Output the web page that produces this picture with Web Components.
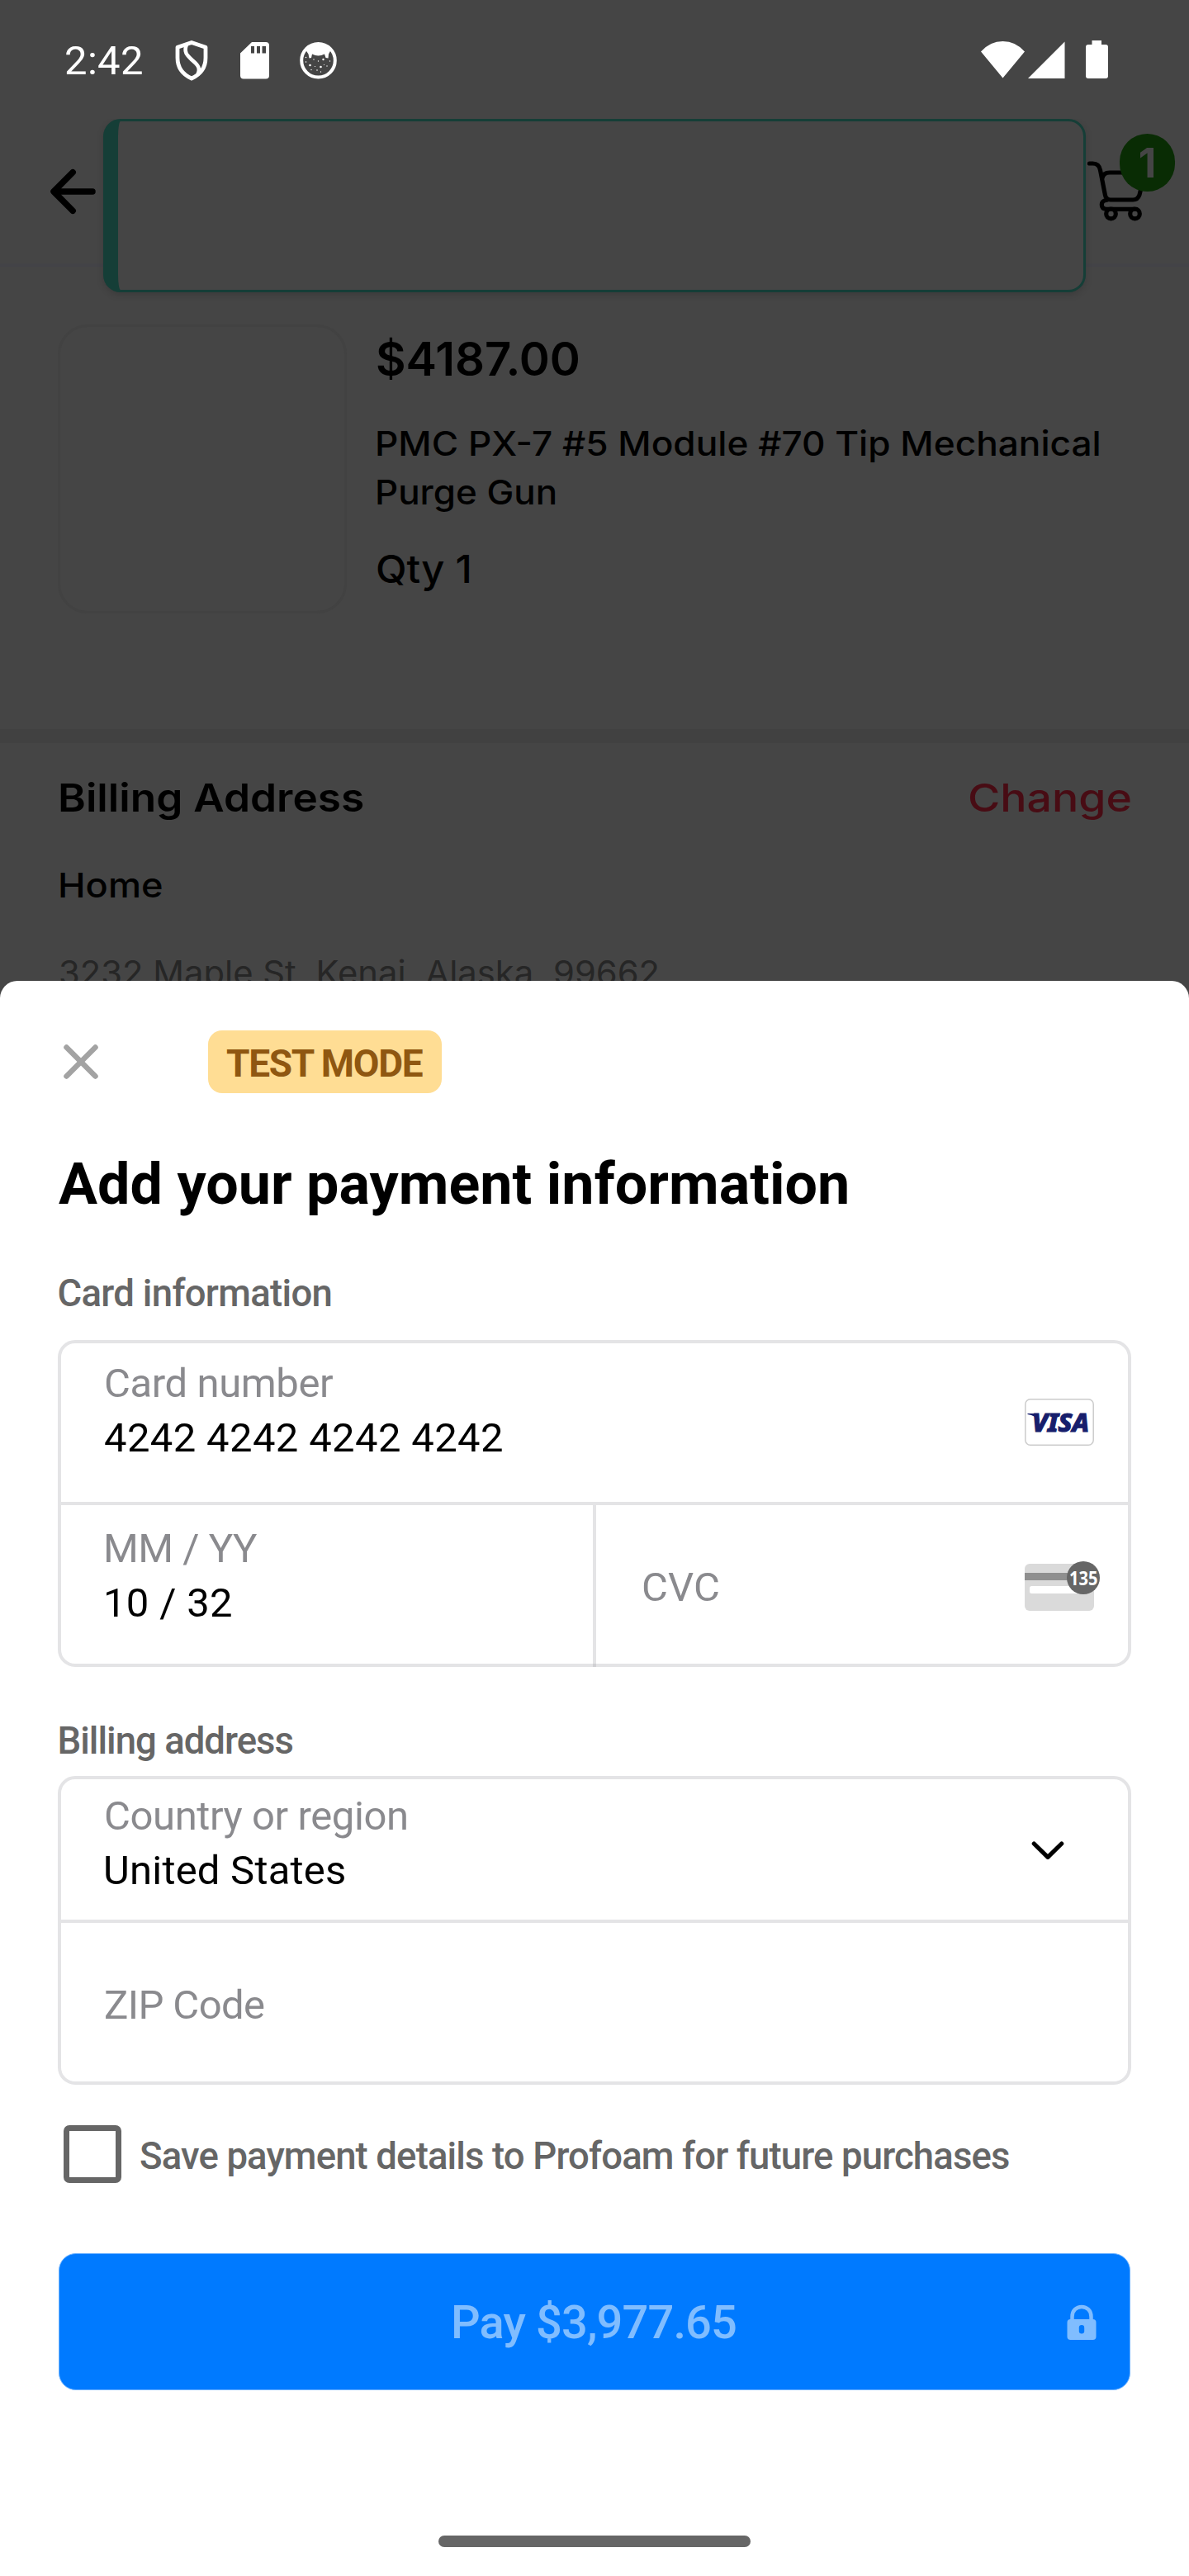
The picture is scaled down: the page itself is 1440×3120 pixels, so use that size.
<!DOCTYPE html>
<html lang="en">
<head>
<meta charset="utf-8">
<title>Checkout</title>
<style>
  html, body { margin: 0; background: #454545; }
  body { width: 1440px; height: 3120px; overflow: hidden; font-family: Roboto, "Liberation Sans", sans-serif; color: #000; }
</style>
</head>
<body>
<status-bar></status-bar>
<checkout-screen>
  <app-header slot="header" count="1"></app-header>
  <product-summary slot="product"></product-summary>
  <address-block slot="address"></address-block>
</checkout-screen>
<payment-sheet></payment-sheet>

<script>
const define = (name, html, setup) => {
  const template = document.createElement('template');
  template.innerHTML = html;
  customElements.define(name, class extends HTMLElement {
    constructor() {
      super();
      this.attachShadow({ mode: 'open' }).appendChild(template.content.cloneNode(true));
    }
    connectedCallback() { if (setup) setup(this, this.shadowRoot); }
  });
};

/* One line of text whose ink spans the "ink" width and starts at the left edge:
   by tracking, or, with "stretch", by widening the letters. */
const pen = document.createElement('canvas').getContext('2d');
define('fit-text', `<style>
    :host { display: block; white-space: nowrap; flex: none; }
    span { display: block; transform-origin: 0 0; }
  </style><span><slot></slot></span>`,
  (el, root) => {
    const text = el.textContent;
    if (!text) return;
    const s = getComputedStyle(el);
    pen.font = `${s.fontStyle} ${s.fontWeight} ${s.fontSize} ${s.fontFamily}`;
    const m = pen.measureText(text);
    const ink = parseFloat(el.getAttribute('ink'));
    const natural = m.actualBoundingBoxLeft + m.actualBoundingBoxRight;
    const span = root.querySelector('span');
    el.style.width = ink + 'px';
    if (el.hasAttribute('stretch')) {
      const k = ink / natural;
      span.style.width = natural + 'px';
      span.style.transform = `scaleX(${k})`;
      span.style.marginLeft = m.actualBoundingBoxLeft * k + 'px';
    } else {
      span.style.letterSpacing = (ink - natural) / (text.length - 1) + 'px';
      span.style.marginLeft = m.actualBoundingBoxLeft + 'px';
    }
  });

define('status-bar', `
  <style>
    :host { display: flex; box-sizing: border-box; height: 144px; padding: 45px 98px 0 80px; color: #fff; }
    fit-text { font-size: 49px; line-height: 58px; margin-right: 40px; }
    svg { display: block; fill: #fff; height: 56px; flex: none; }
    .left, .right { display: flex; align-items: flex-start; }
    .left { flex: 1; }
  </style>
  <div class="left">
    <fit-text ink="92">2:42</fit-text>
    <svg width="40" viewBox="0 0 40 56"><path d="M20 6.500 37 12.300V25C37 37 30 45.500 20 50 10 45.500 3 37 3 25V12.300Z" fill="none" stroke="#fff" stroke-width="4.800" stroke-linejoin="round"/><path d="M14.500 8C9.500 18 15 22.500 21 28 28 34 31 38 27.500 45" fill="none" stroke="#fff" stroke-width="4.600"/></svg>
    <svg width="35" viewBox="0 0 35 56" style="margin-left:39px"><path fill-rule="evenodd" d="M14 6H31Q35 6 35 10V46.500Q35 50.500 31 50.500H4Q0 50.500 0 46.500V19.500ZM13 11V19.500H17V11ZM20 11V19.500H24V11ZM26.500 11V19.500H31V11Z"/></svg>
    <svg width="45" viewBox="0 0 45 56" style="margin-left:37px"><circle cx="22.500" cy="28.300" r="20.300" fill="none" stroke="#fff" stroke-width="4"/><path d="M7.500 16Q12 7 22.500 7T37.500 16L35 20.500 34.500 25.500 31.500 25 30 20.500Q22.500 24.500 15 20.500L14 25 11.500 25.500 10.500 20.500Z"/><g><circle cx="12.500" cy="34" r="1.300"/><circle cx="28.500" cy="27" r="1.200"/><circle cx="25.500" cy="36" r="1.300"/><circle cx="18.500" cy="35.500" r=".6"/><circle cx="22.500" cy="29" r=".7"/><circle cx="33" cy="35" r=".7"/><circle cx="14" cy="39.500" r=".7"/><circle cx="21" cy="40" r=".8"/><circle cx="25.500" cy="42" r=".7"/><circle cx="29.500" cy="33.500" r=".6"/><circle cx="7.500" cy="30" r=".8"/><circle cx="36.500" cy="29" r=".7"/><circle cx="7.500" cy="24.500" r=".8"/><circle cx="17" cy="27" r=".7"/></g></svg>
  </div>
  <div class="right">
    <svg width="53" viewBox="0 0 53 56"><path d="M0 17.500Q11 5 26.500 5T53 17.500L26.500 49.500Z"/></svg>
    <svg width="45" viewBox="0 0 45 56" style="margin-left:4px"><path d="M44.500 5.500V50H0Z"/></svg>
    <svg width="27" viewBox="0 0 27 56" style="margin-left:25px"><path d="M7.500 4H19V9H24Q27 9 27 12V47Q27 50 24 50H3Q0 50 0 47V12Q0 9 3 9H7.500Z"/></svg>
  </div>`);

define('checkout-screen', `
  <style>
    :host { display: block; height: 1044px; overflow: hidden; font-family: Inter, "Liberation Sans", sans-serif; }
    .rule { height: 17px; background: #414141; }
  </style>
  <slot name="header"></slot>
  <slot name="product"></slot>
  <div class="rule"></div>
  <slot name="address"></slot>`);

define('app-header', `
  <style>
    :host { display: flex; align-items: flex-start; box-sizing: border-box; height: 179px; border-bottom: 4px solid #434347; padding-left: 61px; position: relative; z-index: 1; }
    svg { display: block; flex: none; fill: none; stroke: #000; stroke-linecap: round; stroke-linejoin: round; }
    .back { margin-top: 60px; }
    .toast { box-sizing: border-box; flex: none; width: 1190px; height: 210px; margin-left: 9px; background: #454545; border: 3.500px solid #153e37; border-left-width: 18px; border-radius: 21px; box-shadow: 0 3px 8px rgba(0,0,0,.15); }
    .cart { position: relative; margin: 50px 0 0 1px; }
    .badge { position: absolute; left: 40px; top: -32px; width: 67px; height: 70px; border-radius: 34px; background: #092c04; display: flex; justify-content: center; color: #454545; font: 700 50px/70px Inter, sans-serif; }
  </style>
  <svg class="back" width="55" height="56" viewBox="0 0 55 56" stroke-width="7.500"><path d="M51 28H4.500M27.200 4.700 4 28 27.200 51.300"/></svg>
  <div class="toast"></div>
  <div class="cart">
    <svg width="72" height="76" viewBox="0 0 72 76" stroke-width="5.200"><path d="M3.500 4H7.500Q15 4 16.500 12L22.500 42.500Q23.500 48 29 48H56Q62 48 64 42L69 21Q70 15 64 15H28Q20 15 19 22M24 48.500Q18.300 49 18.300 54T24 59.300H58"/><circle cx="29.500" cy="65" r="5.800"/><circle cx="58.500" cy="65" r="5.800"/></svg>
    <div class="badge"></div>
  </div>`,
  (el, root) => { root.querySelector('.badge').textContent = el.getAttribute('count'); });

define('product-summary', `
  <style>
    :host { display: flex; box-sizing: border-box; height: 560px; padding: 70px 70px 0; gap: 37px; }
    .thumb { box-sizing: border-box; width: 350px; height: 350px; border: 3.500px solid #424242; border-radius: 36px; flex: none; }
    .info { display: flex; flex-direction: column; padding-top: 8px; }
    .price { font-size: 56px; font-weight: 600; line-height: 68px; }
    .name { font-size: 41px; font-weight: 450; line-height: 58.500px; }
    .qty { font-size: 47px; font-weight: 450; line-height: 60px; margin-top: 34px; }
  </style>
  <div class="thumb"></div>
  <div class="info">
    <fit-text stretch class="price" ink="244">$4187.00</fit-text>
    <fit-text stretch class="name" ink="874" style="margin-top:39px">PMC PX-7 #5 Module #70 Tip Mechanical</fit-text>
    <fit-text stretch class="name" ink="215">Purge Gun</fit-text>
    <fit-text stretch class="qty" ink="111">Qty 1</fit-text>
  </div>`);

define('address-block', `
  <style>
    :host { display: block; padding: 36px 71px 0 73px; }
    .head { display: flex; justify-content: space-between; font-size: 47px; line-height: 60px; }
    .head fit-text:first-child { font-weight: 600; }
    .change { color: #480c14; font-weight: 450; }
    .home { font-size: 41px; font-weight: 450; line-height: 50px; margin-top: 51px; }
    .street { font-size: 41px; line-height: 50px; margin-top: 56px; color: #262626; }
  </style>
  <div class="head"><fit-text stretch ink="366">Billing Address</fit-text><fit-text stretch class="change" ink="195">Change</fit-text></div>
  <fit-text stretch class="home" ink="123">Home</fit-text>
  <fit-text stretch class="street" ink="724">3232 Maple St, Kenai, Alaska, 99662</fit-text>`);

/* Label over value, with an optional icon at the right. */
define('form-field', `
  <style>
    :host { display: flex; box-sizing: border-box; flex: 1; padding: var(--top, 16px) 41px 0 53px; justify-content: space-between; font-size: 49px; line-height: 66px; }
    ::slotted([slot=label]) { color: #8a8a8e; }
  </style>
  <div><slot name="label"></slot><slot name="value"></slot></div>
  <slot name="icon"></slot>`);

define('field-group', `
  <style>
    :host { display: block; box-sizing: border-box; border: 4px solid #e4e4e6; border-radius: 21px; }
    .row { display: flex; }
    .first { height: var(--first, 192px); border-bottom: 4px solid #e4e4e6; }
    .second { height: 192px; }
  </style>
  <div class="row first"><slot name="first"></slot></div>
  <div class="row second"><slot name="second"></slot></div>`);

define('pay-button', `
  <style>
    :host { display: flex; box-sizing: border-box; height: 166px; margin: 85px 1px 0; border: 1px solid #6cb2ff; border-radius: 21px; background: #007aff; color: #80bdff; padding: 1px 40px 0 478px; justify-content: space-between; font-size: 56px; font-weight: 500; line-height: 164px; }
    svg { display: block; margin-top: 60px; flex: none; }
  </style>
  <slot></slot>
  <svg width="36" height="44" viewBox="0 0 36 44"><path d="M6.500 22V15C6.500 7.500 11.500 3 18 3S29.500 7.500 29.500 15V22" fill="none" stroke="#80bdff" stroke-width="4.500"/><rect x=".5" y="18" width="35" height="25" rx="4" fill="#80bdff"/><rect x="14.800" y="25" width="6.400" height="10.500" rx="3.200" fill="#007aff"/></svg>`);

define('payment-sheet', `
  <style>
    :host { display: block; box-sizing: border-box; height: 1932px; background: #fff; border-radius: 21px 21px 0 0; padding: 60px 70px 0; }
    svg { display: block; flex: none; }
    .top { display: flex; align-items: center; height: 76px; padding-left: 7px; }
    .mode { margin-left: 133px; box-sizing: border-box; width: 283px; height: 76px; padding: 2px 0 0 22px; background: #ffdd94; border-radius: 17px; color: #8f5711; font-size: 46px; font-weight: 700; line-height: 76px; }
    .title { font-size: 70px; font-weight: 700; line-height: 84px; margin: 68px 0 62.500px 1px; }
    .label { font-size: 45.500px; font-weight: 500; line-height: 56px; color: #666; }
    field-group.card { margin-top: 28.500px; }
    field-group.bill { margin-top: 14.500px; --first: 170px; }
    .v { width: 4px; height: 192px; background: #e4e4e6; border-bottom: 4px solid #d0d0d3; flex: none; }
    .save { display: flex; margin: 49px 0 0 7px; height: 70px; color: #666; font-size: 45.500px; font-weight: 500; line-height: 75px; }
    .box { box-sizing: border-box; width: 70px; height: 70px; border: 7px solid #666; border-radius: 7px; margin-right: 23px; }
    .pill { width: 378px; height: 14px; border-radius: 7px; background: #666; margin: 176px auto 0; }
  </style>
  <div class="top">
    <svg width="42" height="42" viewBox="0 0 42 42"><path d="M3.500 3.500 38.500 38.500M38.500 3.500 3.500 38.500" stroke="#a3a3a3" stroke-width="6.500" stroke-linecap="round"/></svg>
    <div class="mode"><fit-text ink="239">TEST MODE</fit-text></div>
  </div>
  <fit-text class="title" ink="955">Add your payment information</fit-text>
  <fit-text class="label" ink="329" style="margin-left:1.500px">Card information</fit-text>
  <field-group class="card">
    <form-field slot="first">
      <fit-text slot="label" ink="275" style="margin-left:1px">Card number</fit-text>
      <fit-text slot="value" ink="481">4242 4242 4242 4242</fit-text>
      <svg slot="icon" width="84" height="57" viewBox="0 0 84 57" style="margin-top:51px"><rect x=".8" y=".8" width="82.400" height="55.400" rx="6" fill="#fff" stroke="#ccc" stroke-width="1.500"/><text x="9" y="40" font-family="Noto Sans" font-weight="800" font-style="italic" font-size="30" textLength="69" lengthAdjust="spacingAndGlyphs" fill="#171e6c" stroke="#171e6c" stroke-width="1.200">VISA</text><path d="M3.500 18H16L18 27Q13 20.500 3.500 19Z" fill="#171e6c"/></svg>
    </form-field>
    <form-field slot="second" style="--top:20px;flex:0 0 644px">
      <fit-text slot="label" ink="182" style="margin-left:2px">MM / YY</fit-text>
      <fit-text slot="value" ink="151" style="margin-left:2px">10 / 32</fit-text>
    </form-field>
    <div class="v" slot="second"></div>
    <form-field slot="second" style="padding:67px 34px 0 57px">
      <fit-text slot="label" ink="91">CVC</fit-text>
      <svg slot="icon" width="91" height="64" viewBox="0 0 91 64"><rect y="4" width="84" height="57" rx="6" fill="#dadada"/><rect y="15" width="84" height="9" fill="#8f8f8f"/><rect x="6" y="31" width="62" height="9" rx="2.500" fill="#fff"/><circle cx="71" cy="21" r="20" fill="#666"/><text x="54" y="29.500" font-family="Noto Sans" font-weight="700" font-size="24" textLength="34.500" lengthAdjust="spacingAndGlyphs" fill="#fff">135</text></svg>
    </form-field>
  </field-group>
  <fit-text class="label" ink="282" style="margin:61.500px 0 0 2.500px">Billing address</fit-text>
  <field-group class="bill">
    <form-field slot="first" style="--top:12px;padding-right:77px">
      <fit-text slot="label" ink="364" style="margin-left:1px">Country or region</fit-text>
      <fit-text slot="value" ink="289" style="margin-left:1px">United States</fit-text>
      <svg slot="icon" width="40" height="24" viewBox="0 0 40 24" style="margin-top:62px"><path d="M3.300 4 20 20.300 36.700 4" fill="none" stroke="#000" stroke-width="5.200" stroke-linecap="round" stroke-linejoin="round"/></svg>
    </form-field>
    <form-field slot="second" style="--top:67px">
      <fit-text slot="label" ink="192" style="margin-left:1px">ZIP Code</fit-text>
    </form-field>
  </field-group>
  <div class="save"><div class="box"></div><fit-text ink="1052">Save payment details to Profoam for future purchases</fit-text></div>
  <pay-button><fit-text ink="341">Pay $3,977.65</fit-text></pay-button>
  <div class="pill"></div>`);
</script>
</body>
</html>
